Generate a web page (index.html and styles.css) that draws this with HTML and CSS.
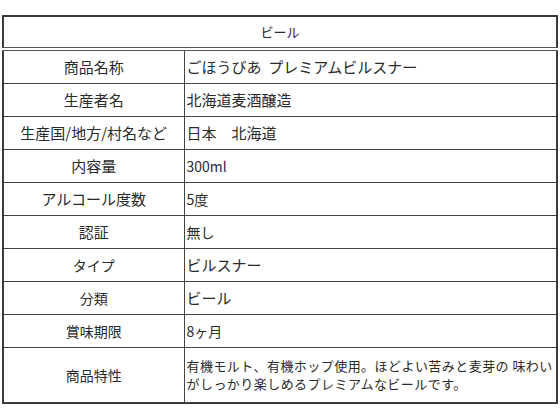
FILE: index.html
```html
<!DOCTYPE html>
<html lang="ja">
<head>
<meta charset="utf-8">
<link rel="stylesheet" href="styles.css">
</head>
<body>
<table class="spec">
  <colgroup><col class="c-label"><col class="c-value"></colgroup>
  <thead>
    <tr><th colspan="2" class="title">ビール</th></tr>
  </thead>
  <tbody>
    <tr><td class="label">商品名称</td><td class="value">ごほうびあ&nbsp;&nbsp;プレミアムビルスナー</td></tr>
    <tr><td class="label">生産者名</td><td class="value">北海道麦酒醸造</td></tr>
    <tr><td class="label">生産国/地方/村名など</td><td class="value">日本　北海道</td></tr>
    <tr><td class="label">内容量</td><td class="value small">300ml</td></tr>
    <tr><td class="label">アルコール度数</td><td class="value small">5度</td></tr>
    <tr><td class="label">認証</td><td class="value small">無し</td></tr>
    <tr><td class="label small">タイプ</td><td class="value">ビルスナー</td></tr>
    <tr><td class="label small">分類</td><td class="value">ビール</td></tr>
    <tr><td class="label small">賞味期限</td><td class="value small">8ヶ月</td></tr>
    <tr class="tall"><td class="label small">商品特性</td><td class="value desc">有機モルト、有機ホップ使用。ほどよい苦みと麦芽の 味わい<br>がしっかり楽しめるプレミアムなビールです。</td></tr>
  </tbody>
</table>
</body>
</html>
```
FILE: styles.css
```css
html, body {
  margin: 0;
  padding: 0;
  background: #ffffff;
}
body {
  padding: 15px 0 0 2px;
  font-family: "Noto Sans CJK JP", "Liberation Sans", sans-serif;
  color: #2a2a2a;
}
.spec {
  width: 556px;
  table-layout: fixed;
  border-collapse: collapse;
  border: 2px solid #3a3a3a;
}
.c-label { width: 181px; }
.spec th, .spec td {
  border: 1px solid #444;
  padding: 0 2px;
  height: 32px;
  line-height: 18px;
  font-weight: normal;
  white-space: nowrap;
}
.spec th.title {
  font-size: 13px;
  height: 30px;
  border-bottom: 4px double #555;
}
.label {
  text-align: center;
  font-size: 15px;
}
.value {
  text-align: left;
  font-size: 15px;
}
.small { font-size: 14px; }
.spec .tall td { height: 54px; }
.desc {
  font-size: 13px;
  line-height: 17px;
  letter-spacing: 0.45px;
}
```
